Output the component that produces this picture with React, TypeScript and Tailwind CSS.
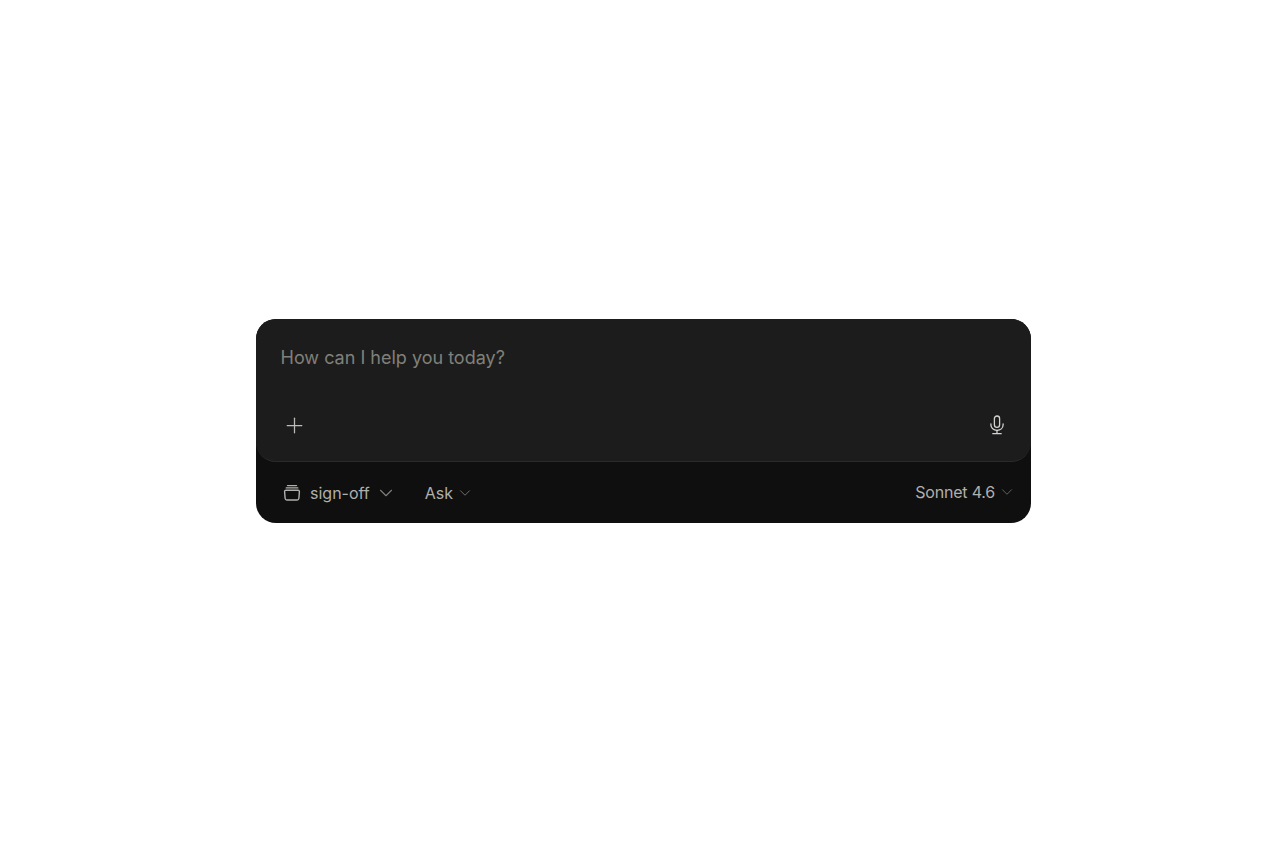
import React from 'react';
import { ChevronDown, Plus } from 'lucide-react';

const FolderStack: React.FC = () => (
  <svg width="20" height="20" viewBox="0 0 20 20" fill="none" stroke="#b0b0ac" strokeWidth="1.4" strokeLinecap="round" strokeLinejoin="round">
    <path d="M5.5 2.6h9" />
    <path d="M4.2 4.9h11.6" />
    <path d="M2.600 8.600c0-.8.6-1.400 1.400-1.400h12c.8 0 1.400.6 1.400 1.400l-.5 6.600c-.1 1-.8 1.800-1.800 1.800H4.900c-1 0-1.700-.8-1.800-1.800z" />
  </svg>
);

const Mic: React.FC = () => (
  <svg width="20" height="20" viewBox="0 0 20 20" fill="none" stroke="#d2d2cf" strokeWidth="1.3" strokeLinecap="round" strokeLinejoin="round">
    <rect x="7.400" y="1" width="5.200" height="11.400" rx="2.600" />
    <path d="M3.900 8.800v1c0 3.300 2.700 5.500 6.100 5.500s6.100-2.200 6.100-5.500v-1" />
    <path d="M10 15.300v3" />
    <path d="M5.800 18.700h8.400" />
  </svg>
);

const App: React.FC = () => {
  return (
    <div className="min-h-[853px] bg-white pt-[319px] pl-[256px] font-['Inter',sans-serif]">
      <div className="w-[775px] h-[204px] rounded-[20px] bg-[#0f0f0f] flex flex-col">
        <div className="h-[143px] rounded-[20px] bg-[#1c1c1c] border-b border-[#2b2b2b] flex flex-col justify-between pt-[26px] pb-[26px] pl-[25px] pr-[24px]">
          <div className="text-[18px] leading-[26px] text-[#80807a] -ml-[0.5px]">How can I help you today?</div>
          <div className="flex items-center justify-between">
            <Plus size={25} strokeWidth={1.2} color="#bcbcb8" className="ml-[1px] -my-[3px]" />
            <Mic />
          </div>
        </div>
        <div className="flex-1 flex items-center justify-between pl-[26px] pr-[15px] text-[16px] text-[#b0b0ac]">
          <div className="flex items-center">
            <FolderStack />
            <span className="ml-[8px]">sign-off</span>
            <ChevronDown size={22} strokeWidth={1.2} color="#7f7f7b" className="ml-[5px] -my-[2px]" />
            <span className="ml-[28px]">Ask</span>
            <ChevronDown size={18} strokeWidth={1.3} color="#6f6f6b" className="ml-[3px]" />
          </div>
          <div className="flex items-center pb-[1px]">
            <span className="tracking-[-0.2px]">Sonnet 4.6</span>
            <ChevronDown size={18} strokeWidth={1.3} color="#62625e" className="ml-[3px]" />
          </div>
        </div>
      </div>
    </div>
  );
};

export default App;
